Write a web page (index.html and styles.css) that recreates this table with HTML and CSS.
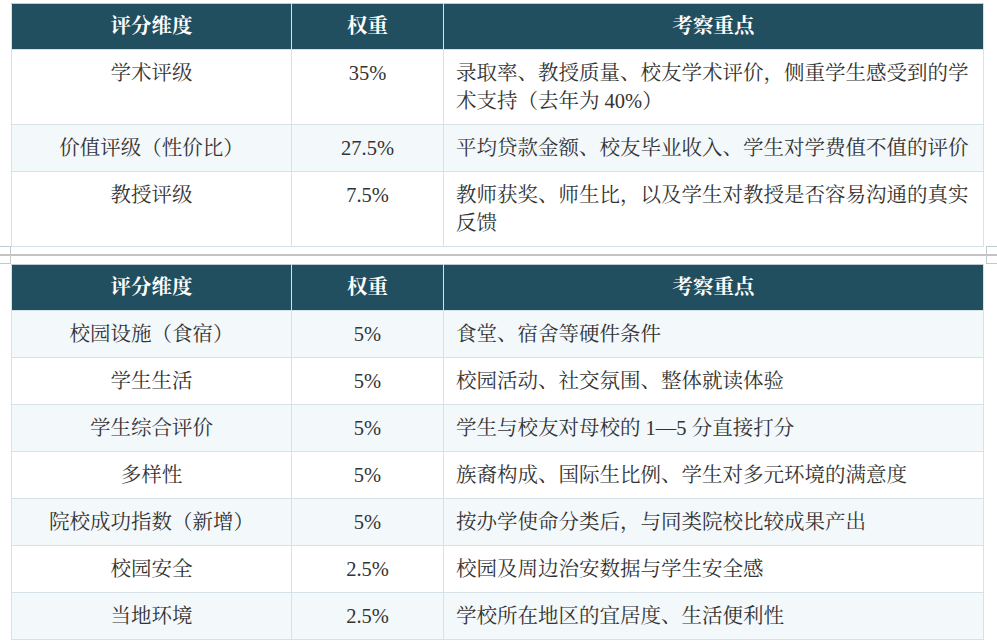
FILE: index.html
```html
<!DOCTYPE html>
<html lang="zh-CN">
<head>
<meta charset="utf-8">
<title>评分维度</title>
<link rel="stylesheet" href="styles.css">
</head>
<body>
<div class="page">
  <table class="grid">
    <colgroup><col class="c1"><col class="c2"><col class="c3"></colgroup>
    <thead>
      <tr><th>评分维度</th><th>权重</th><th>考察重点</th></tr>
    </thead>
    <tbody>
      <tr><td class="ctr">学术评级</td><td class="ctr">35%</td><td>录取率、教授质量、校友学术评价，侧重学生感受到的学术支持（去年为 40%）</td></tr>
      <tr class="alt"><td class="ctr">价值评级（性价比）</td><td class="ctr">27.5%</td><td>平均贷款金额、校友毕业收入、学生对学费值不值的评价</td></tr>
      <tr><td class="ctr">教授评级</td><td class="ctr">7.5%</td><td>教师获奖、师生比，以及学生对教授是否容易沟通的真实反馈</td></tr>
    </tbody>
  </table>

  <div class="page-gap">
    <span class="mark mark-l"></span>
    <span class="rule"></span>
    <span class="mark mark-r"></span>
  </div>

  <table class="grid">
    <colgroup><col class="c1"><col class="c2"><col class="c3"></colgroup>
    <thead>
      <tr><th>评分维度</th><th>权重</th><th>考察重点</th></tr>
    </thead>
    <tbody>
      <tr class="alt"><td class="ctr">校园设施（食宿）</td><td class="ctr">5%</td><td>食堂、宿舍等硬件条件</td></tr>
      <tr><td class="ctr">学生生活</td><td class="ctr">5%</td><td>校园活动、社交氛围、整体就读体验</td></tr>
      <tr class="alt"><td class="ctr">学生综合评价</td><td class="ctr">5%</td><td>学生与校友对母校的 1—5 分直接打分</td></tr>
      <tr><td class="ctr">多样性</td><td class="ctr">5%</td><td>族裔构成、国际生比例、学生对多元环境的满意度</td></tr>
      <tr class="alt"><td class="ctr">院校成功指数（新增）</td><td class="ctr">5%</td><td>按办学使命分类后，与同类院校比较成果产出</td></tr>
      <tr><td class="ctr">校园安全</td><td class="ctr">2.5%</td><td>校园及周边治安数据与学生安全感</td></tr>
      <tr class="alt"><td class="ctr">当地环境</td><td class="ctr">2.5%</td><td>学校所在地区的宜居度、生活便利性</td></tr>
    </tbody>
  </table>
  <p class="note">注：权重 2026 年版由各项指标加权汇总得出，仅供参考。</p>
</div>
</body>
</html>
```

FILE: styles.css
```css
html, body {
  margin: 0;
  padding: 0;
  background: #ffffff;
}

body {
  font-family: "Liberation Serif", "Noto Serif CJK SC", "Noto Sans CJK SC", serif;
  color: #333333;
  overflow: hidden;
}

.page {
  padding: 3px 0 0 11px;
  width: 973px;
}

.grid {
  width: 973px;
  border-collapse: collapse;
  table-layout: fixed;
  font-size: 20.5px;
  line-height: 28px;
  border: 1px solid #bccbd3;
}

.c1 { width: 280px; }
.c2 { width: 152px; }
.c3 { width: auto; }

.grid th {
  background: #214f5f;
  color: #ffffff;
  font-weight: bold;
  text-align: center;
  padding: 8px 12px 9px;
  border: 1px solid #d6e2e8;
  border-top-color: #bccbd3;
}

.grid td {
  padding: 9px 12px 9px;
  border: 1px solid #d6e1e8;
  vertical-align: top;
  text-align: left;
}

.grid td.ctr {
  text-align: center;
}

.grid tr.alt td {
  background: #f3f8fb;
}

.page-gap {
  position: relative;
  height: 17px;
  margin-left: -11px;
  width: 997px;
  display: flex;
  align-items: center;
}

.page-gap .rule {
  display: block;
  width: 100%;
  height: 2px;
  background: #c3c3c3;
  margin-top: -1px;
}

.page-gap .mark {
  position: absolute;
  top: -1px;
  width: 10px;
  height: 16px;
  border-top: 1px solid #bfc9ce;
  border-bottom: 1px solid #bfc9ce;
}

.mark-l {
  left: 0;
  border-right: 1px solid #bfc9ce;
}

.mark-r {
  right: 0;
  width: 11px;
  border-left: 1px solid #bfc9ce;
}

.note {
  margin: 5px 0 0 4px;
  font-size: 20.5px;
  line-height: 28px;
  color: #555555;
}
```
